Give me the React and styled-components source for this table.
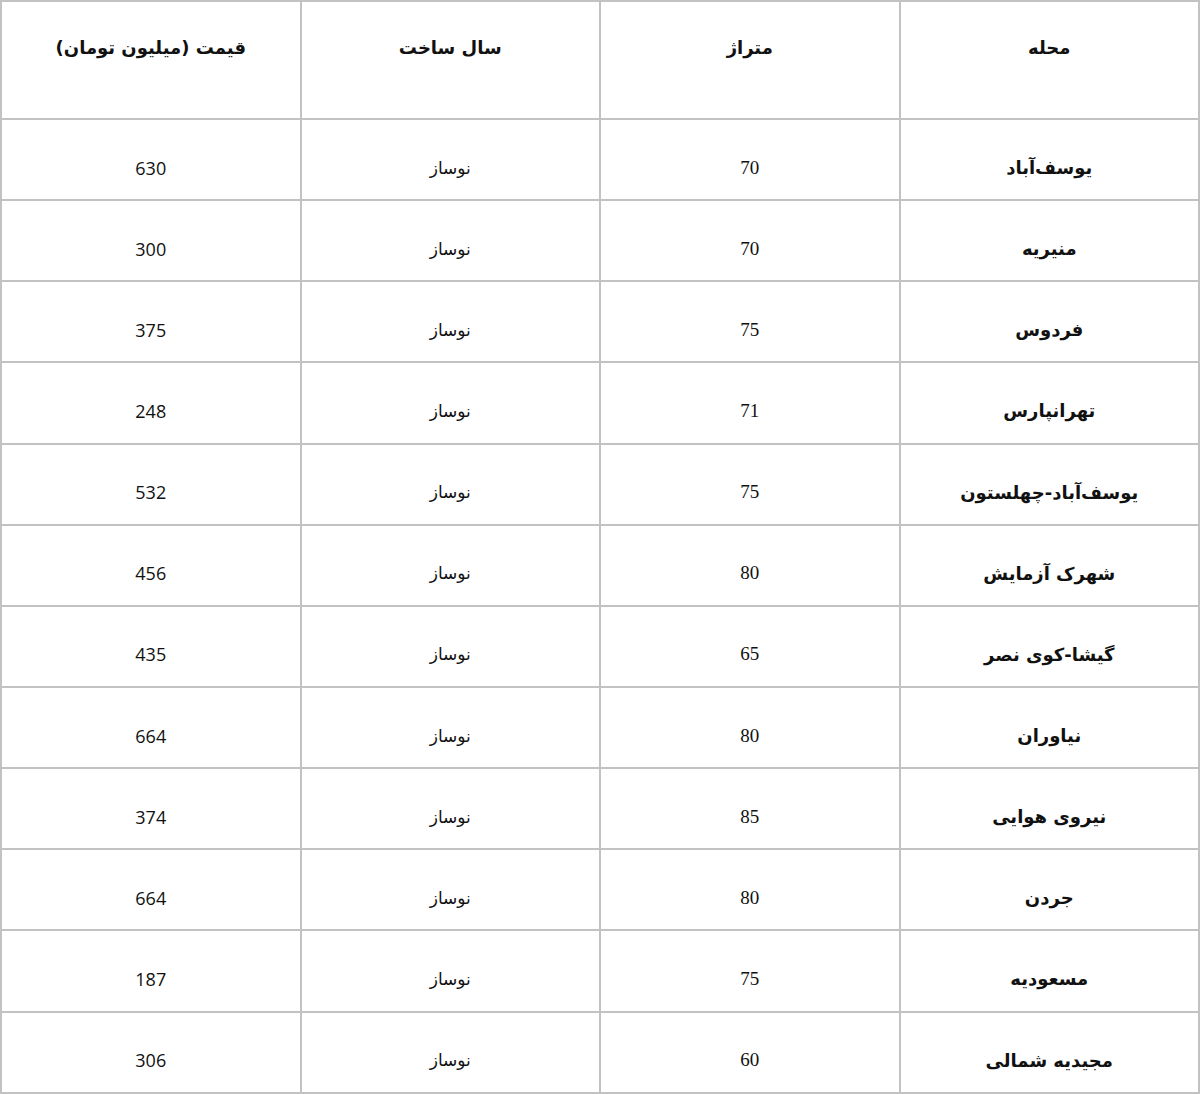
import React from "react";
import styled, { createGlobalStyle } from "styled-components";

const rows = [
  ["یوسف‌آباد", "70", "نوساز", "630"],
  ["منیریه", "70", "نوساز", "300"],
  ["فردوس", "75", "نوساز", "375"],
  ["تهرانپارس", "71", "نوساز", "248"],
  ["یوسف‌آباد-چهلستون", "75", "نوساز", "532"],
  ["شهرک آزمایش", "80", "نوساز", "456"],
  ["گیشا-کوی نصر", "65", "نوساز", "435"],
  ["نیاوران", "80", "نوساز", "664"],
  ["نیروی هوایی", "85", "نوساز", "374"],
  ["جردن", "80", "نوساز", "664"],
  ["مسعودیه", "75", "نوساز", "187"],
  ["مجیدیه شمالی", "60", "نوساز", "306"],
];

const GlobalStyle = createGlobalStyle`
  body {
    margin: 0;
    background: #ffffff;
    font-family: "DejaVu Sans", "Noto Sans", sans-serif;
    color: #111;
  }
`;

const Table = styled.table`
  width: 1200px;
  border-collapse: collapse;
  table-layout: fixed;
  direction: rtl;
  border: 2px solid #c2c2c2;
`;

const HeadCell = styled.th`
  height: 118px;
  border: 2px solid #c2c2c2;
  vertical-align: top;
  padding-top: 35px;
  font-family: "DejaVu Sans", sans-serif;
  font-weight: bold;
  font-size: 18px;
  text-align: center;
  box-sizing: border-box;
`;

const Cell = styled.td`
  height: 81.15px;
  border: 2px solid #c2c2c2;
  text-align: center;
  vertical-align: middle;
  padding-top: 17px;
  box-sizing: border-box;
  font-size: ${(p) => p.$size || 18}px;
  font-weight: ${(p) => (p.$bold ? "bold" : "normal")};
  font-family: ${(p) => p.$font || '"DejaVu Sans", sans-serif'};
`;

export default function App() {
  return (
    <>
      <GlobalStyle />
      <Table>
        <thead>
          <tr>
            <HeadCell>محله</HeadCell>
            <HeadCell>متراژ</HeadCell>
            <HeadCell>سال ساخت</HeadCell>
            <HeadCell>قیمت (میلیون تومان)</HeadCell>
          </tr>
        </thead>
        <tbody>
          {rows.map((r, i) => (
            <tr key={i}>
              <Cell $bold $size={18}>
                {r[0]}
              </Cell>
              <Cell $font='"Liberation Serif", serif' $size={19}>
                {r[1]}
              </Cell>
              <Cell $size={17}>{r[2]}</Cell>
              <Cell $font='"Open Sans", sans-serif' $size={18}>
                {r[3]}
              </Cell>
            </tr>
          ))}
        </tbody>
      </Table>
    </>
  );
}
